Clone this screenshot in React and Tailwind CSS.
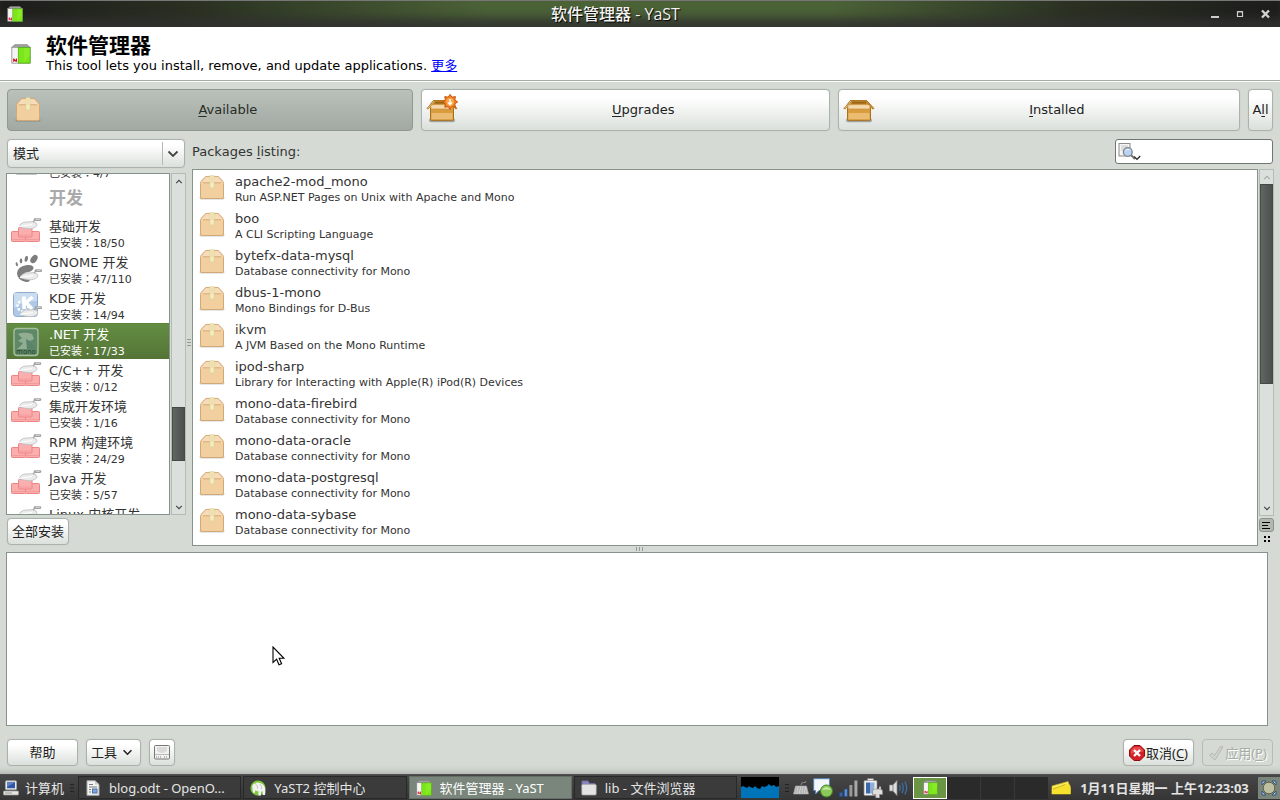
import React from "react";

const packages = [
  ["apache2-mod_mono", "Run ASP.NET Pages on Unix with Apache and Mono"],
  ["boo", "A CLI Scripting Language"],
  ["bytefx-data-mysql", "Database connectivity for Mono"],
  ["dbus-1-mono", "Mono Bindings for D-Bus"],
  ["ikvm", "A JVM Based on the Mono Runtime"],
  ["ipod-sharp", "Library for Interacting with Apple(R) iPod(R) Devices"],
  ["mono-data-firebird", "Database connectivity for Mono"],
  ["mono-data-oracle", "Database connectivity for Mono"],
  ["mono-data-postgresql", "Database connectivity for Mono"],
  ["mono-data-sybase", "Database connectivity for Mono"],
];

const patterns = [
  { name: "基础开发", count: "18/50", Icon: BricksIcon },
  { name: "GNOME 开发", count: "47/110", Icon: GnomeIcon },
  { name: "KDE 开发", count: "14/94", Icon: KdeIcon },
  { name: ".NET 开发", count: "17/33", Icon: MonoIcon, selected: true },
  { name: "C/C++ 开发", count: "0/12", Icon: BricksIcon },
  { name: "集成开发环境", count: "1/16", Icon: BricksIcon },
  { name: "RPM 构建环境", count: "24/29", Icon: BricksIcon },
  { name: "Java 开发", count: "5/57", Icon: BricksIcon },
  { name: "Linux 内核开发", count: "0/8", Icon: BricksIcon },
];

const raised =
  "rounded border border-[#a9b3ab] bg-linear-to-b from-white from-20% to-[#dbe0db] shadow-[0_0_1px_#a9b3ab]";

function YastIcon({ className }) {
  return (
    <svg viewBox="0 0 22 22" className={className} aria-hidden="true">
      <path d="M1 4 L4 0.8 H18 L21 4 Z" fill="#a5a5a5" stroke="#777" strokeWidth="0.8" />
      <rect x="1" y="3.6" width="20" height="17.4" fill="#d8d8d8" stroke="#888" />
      <path d="M1.6 4.2 H8 V20.4 H1.6 Z" fill="#f4f4f4" />
      <rect x="8" y="4" width="13" height="17" fill="#7ce61a" stroke="#4caf0c" strokeWidth="0.8" />
      <path d="M14 4.5 H20.5 V13 L14 20.5 Z" fill="#8ff02d" opacity="0.6" />
      <path d="M3 19.6 V16 M6 19.6 V16 M3 16.6 L6 19.2" stroke="#d00f1c" strokeWidth="1.3" fill="none" />
    </svg>
  );
}

function PackageIcon({ className }) {
  return (
    <svg viewBox="0 0 26 26" className={className} aria-hidden="true">
      <rect x="0.5" y="21.5" width="25" height="3" rx="1.5" fill="#000" opacity="0.2" />
      <path d="M1.5 8.5 Q1.5 7 2.5 6 L6 2.2 Q6.8 1.4 8 1.4 H18 Q19.2 1.4 20 2.2 L23.5 6 Q24.5 7 24.5 8.5 V22 Q24.5 23.5 23 23.5 H3 Q1.5 23.5 1.5 22 Z" fill="#f1cf9f" stroke="#d2a876" />
      <path d="M2.6 7.6 L7 2.2 H19 L23.4 7.6 Z" fill="#f8dcba" />
      <path d="M4 7.8 H22" stroke="#d4ab79" />
      <path d="M11 0.8 H15 V12 L14.2 13.5 L13 12.6 L11.8 13.5 L11 12 Z" fill="#f5eec0" stroke="#ddd09c" strokeWidth="0.7" />
      <path d="M13 2 V8" stroke="#d8c48e" strokeWidth="0.7" />
    </svg>
  );
}

function OpenBoxIcon({ star, className }) {
  return (
    <svg viewBox="0 0 32 28" className={className} aria-hidden="true">
      <rect x="3" y="22.6" width="26" height="3.6" rx="1.8" fill="#000" opacity="0.3" />
      <path d="M7.5 4.6 H23.5 L27.5 9 H4 Z" fill="#d9a14c" stroke="#a86e16" />
      <path d="M9.5 5.4 H22.5 L23.5 7.8 H8 Z" fill="#9a6410" />
      <path d="M4.5 11.5 H27.5 V23.5 Q27.5 24.3 26.5 24.3 H5.5 Q4.5 24.3 4.5 23.5 Z" fill="#d99c3d" stroke="#a97018" />
      <path d="M5.5 17 H26.5 V23.4 H5.5 Z" fill="#efc583" opacity="0.75" />
      <path d="M4.2 8.6 H27.6 L26.6 13 H5.2 Z" fill="#f5d9ac" stroke="#c8903f" strokeWidth="0.7" />
      <path d="M7.5 4.6 L4.2 8.8 L0.8 12.4 L2.2 13 L5 9.6 L8.8 5.4 Z" fill="#f4d49c" stroke="#a97018" strokeWidth="0.8" />
      <path d="M23.5 4.6 L27.6 8.8 L31 12.4 L29.6 13 L27 9.6 L22.4 5.4 Z" fill="#d59335" stroke="#a97018" strokeWidth="0.8" />
      {star && (
        <g transform="translate(-0.4 -1.6)">
          <path d="M24.5 0 L26.4 2.8 L29.8 2.2 L29.2 5.6 L32 7.5 L29.2 9.4 L29.8 12.8 L26.4 12.2 L24.5 15 L22.6 12.2 L19.2 12.8 L19.8 9.4 L17 7.5 L19.8 5.6 L19.2 2.2 L22.6 2.8 Z" fill="#f58220" stroke="#c5540a" />
          <circle cx="24.5" cy="7.5" r="3.8" fill="#fba94c" />
          <path d="M24.5 4.5 V10 M22.6 8 L24.5 10.2 L26.4 8" stroke="#fff" strokeWidth="1.4" fill="none" />
        </g>
      )}
    </svg>
  );
}

function Trowel() {
  return (
    <g>
      <path d="M9 8.5 Q10 5.4 14 4.2 L23 3.6 Q27 4.5 27 7 Q26 10 20 10.8 Q13 10.6 9 8.5 Z" fill="#ebebeb" stroke="#bdbdbd" strokeWidth="0.8" />
      <path d="M9 8.5 L22 6.5" stroke="#fff" strokeWidth="1" />
      <path d="M23 4 L25.5 1.6" stroke="#a8a8a8" strokeWidth="1.4" />
      <path d="M25 1.6 H30" stroke="#a0a0a0" strokeWidth="2.6" strokeLinecap="round" />
      <path d="M26 1.3 H29.4" stroke="#dadada" strokeWidth="1" strokeLinecap="round" />
    </g>
  );
}

function BricksIcon() {
  return (
    <svg viewBox="0 0 32 26" className="mb-1 h-[26px] w-8" aria-hidden="true">
      <g fill="#fbaeae" stroke="#ee8484">
        <rect x="1.5" y="13.5" width="14" height="10" rx="0.8" />
        <rect x="15.5" y="13.5" width="14" height="10" rx="0.8" />
        <rect x="8.5" y="9.5" width="13.5" height="9.5" rx="0.8" />
      </g>
      <path d="M2 21.5 H29 M9 17 H21" stroke="#f49494" strokeWidth="0.8" />
      <Trowel />
    </svg>
  );
}

function DiscIcon() {
  return (
    <svg viewBox="0 0 32 28" className="mb-1 h-7 w-8" aria-hidden="true">
      <rect x="4" y="2" width="25" height="25" rx="3" fill="#b9bab8" stroke="#8d8e8c" />
    </svg>
  );
}

function GnomeIcon() {
  return (
    <svg viewBox="0 0 32 30" className="h-[30px] w-8" aria-hidden="true">
      <g fill="#7d7d7d">
        <ellipse cx="24" cy="5" rx="3" ry="4.6" transform="rotate(35 24 5)" />
        <ellipse cx="16.3" cy="4.8" rx="1.6" ry="3" transform="rotate(15 16.3 4.8)" />
        <ellipse cx="11" cy="7" rx="1.3" ry="2.4" />
        <ellipse cx="6.8" cy="10.2" rx="1.1" ry="2" transform="rotate(-15 6.8 10.2)" />
        <path d="M7 19 Q8 12 17 11 Q24 10.5 23.5 14.5 Q22 18 16 18.5 Q12 20 14 23 Q18 27 20 25 Q20 28.5 16 28 Q7 26 7 19 Z" />
      </g>
      <g transform="translate(1 15)"><Trowel /></g>
    </svg>
  );
}

function KdeIcon() {
  return (
    <svg viewBox="0 0 32 28" className="h-7 w-8" aria-hidden="true">
      <rect x="3.5" y="1.5" width="24" height="24" rx="3" fill="#aec8e6" stroke="#8facd0" />
      <path d="M4 2 H27 V10 Q14 9 4 17 Z" fill="#c9dcf0" />
      <circle cx="13" cy="15" r="5.5" fill="none" stroke="#fff" strokeWidth="2.4" strokeDasharray="2.4 1.6" />
      <path d="M14 5.5 V18 M22.5 6 L16 11.5 L22 18" stroke="#fff" strokeWidth="3.6" fill="none" />
      <g transform="translate(1 15)"><Trowel /></g>
    </svg>
  );
}

function MonoIcon() {
  return (
    <svg viewBox="0 0 32 30" className="h-[30px] w-8" aria-hidden="true">
      <rect x="4" y="1.5" width="24" height="27" rx="3" fill="#5f8868" stroke="#a3bf9c" strokeWidth="1.4" />
      <path d="M8 7 Q14 4.5 22 7 L24 12 L20 14 L25 19 V22 H7 Q11 19 13 16 L8 14 L12 11 Z" fill="#92ae92" />
      <path d="M16 12 L20 14 L25 19 V22 H17 Z" fill="#44705c" opacity="0.7" />
      <text x="16" y="27.3" textAnchor="middle" fontSize="7" fontFamily="DejaVu Sans, sans-serif" fill="#233e28">mono</text>
    </svg>
  );
}

function Chevron({ up, className }) {
  return (
    <svg viewBox="0 0 12 8" className={className} aria-hidden="true">
      <path d={up ? "M1.5 6.5 L6 2 L10.5 6.5" : "M1.5 1.5 L6 6 L10.5 1.5"} fill="none" stroke="currentColor" strokeWidth="1.8" />
    </svg>
  );
}

function Key({ children }) {
  return <span className="underline decoration-1 underline-offset-2">{children}</span>;
}

function ScrollBar({ above, thumb, below, topDisabled }) {
  return (
    <div className="flex w-[15px] shrink-0 flex-col border border-[#b3bcb4] bg-[#dbe0dc]">
      <button aria-label="向上滚动" className={`flex h-[14px] shrink-0 items-center justify-center ${topDisabled ? "text-[#a6ada7]" : "text-[#444]"}`}>
        <Chevron up className="h-[5px] w-2" />
      </button>
      <div className={above} />
      <div className={`border border-[#454a46] bg-linear-to-r from-[#606661] to-[#4b504c] ${thumb}`} />
      <div className={below} />
      <button aria-label="向下滚动" className="flex h-[14px] shrink-0 items-center justify-center text-[#444]">
        <Chevron className="h-[5px] w-2" />
      </button>
    </div>
  );
}

function TitleBar() {
  return (
    <header className="grid h-[27px] shrink-0 grid-cols-[1fr_auto_1fr] items-center border-t border-[#777] bg-[linear-gradient(90deg,#1d1d1b_0%,#2a3022_15%,#4b6237_38%,#4b6237_65%,#2a3022_84%,#1d1d1b_100%)] px-[7px] shadow-[inset_0_-12px_10px_-3px_#30312fdd]">
      <YastIcon className="size-4" />
      <h1 className="pr-[49px] font-['Open_Sans','Noto_Sans_CJK_SC',sans-serif] text-base leading-6 font-medium text-[#f2f2f2] [text-shadow:1px_1px_1px_#000]">软件管理器 - YaST</h1>
      <div className="flex justify-end gap-[9px]">
        <button aria-label="最小化" className="flex size-4 items-center justify-center">
          <svg viewBox="0 0 16 16" className="size-4"><path d="M4 11 H12" stroke="#ccc" strokeWidth="2" /></svg>
        </button>
        <button aria-label="最大化" className="flex size-4 items-center justify-center">
          <svg viewBox="0 0 16 16" className="size-4"><path d="M5.5 5.5 H10.5 V10.5 H5.5 Z M5 6 H11" stroke="#ccc" strokeWidth="1.2" fill="none" /></svg>
        </button>
        <button aria-label="关闭" className="flex size-4 items-center justify-center">
          <svg viewBox="0 0 16 16" className="size-4"><path d="M5 4.5 L12 11.5 M12 4.5 L5 11.5" stroke="#d2d2d2" strokeWidth="2.4" /></svg>
        </button>
      </div>
    </header>
  );
}

function Filters() {
  const big = `${raised} flex h-[42px] flex-auto items-center pl-1`;
  return (
    <nav className="flex gap-2 px-[7px] pt-[7px] text-[#222]">
      <button aria-pressed="true" className="flex h-[42px] flex-auto items-center rounded border border-[#8f998f] bg-linear-to-b from-[#bac1ba] to-[#a2a9a2] pl-1 text-[#282c28]">
        <span className="flex w-8 justify-center"><PackageIcon className="size-[26px]" /></span>
        <span className="flex-1 px-1"><Key>A</Key>vailable</span>
      </button>
      <button className={big}>
        <OpenBoxIcon star className="h-7 w-8 overflow-visible" />
        <span className="flex-1 px-1"><Key>U</Key>pgrades</span>
      </button>
      <button className={big}>
        <OpenBoxIcon className="h-7 w-8" />
        <span className="flex-1 px-1"><Key>I</Key>nstalled</span>
      </button>
      <button className={`${raised} h-[42px] w-[25px]`}>A<Key>l</Key>l</button>
    </nav>
  );
}

function PatternRow({ name, count, Icon, selected }) {
  return (
    <li className={`flex h-9 shrink-0 ${selected ? "border-t border-[#5b8538] bg-linear-to-b from-[#638d42] to-[#547437] text-white" : "text-[#333]"}`}>
      <div className="flex w-[42px] shrink-0 items-center pl-[3px]"><Icon /></div>
      <div className={`whitespace-nowrap ${selected ? "pt-[3px]" : "pt-1"}`}>
        <div className="min-h-4 leading-4">{name}</div>
        <div className="text-[11px] leading-[15px]">
          已安装<span className="font-['Noto_Sans_CJK_TC',sans-serif]">：</span>{count}
        </div>
      </div>
    </li>
  );
}

function Sidebar() {
  return (
    <aside className="flex w-[180px] shrink-0 flex-col">
      <div className="relative ml-px w-[178px]">
        <select aria-label="分组方式" className={`${raised} h-[29px] w-full appearance-none pl-[5px] text-[#222]`}>
          <option>模式</option>
        </select>
        <span className="pointer-events-none absolute inset-y-[3px] right-0 flex w-[23px] items-center justify-center border-l border-[#b3bab3] pr-[3px] text-[#444]">
          <Chevron className="h-[8px] w-3" />
        </span>
      </div>
      <div className="mt-[5px] flex min-h-0 flex-1 gap-px">
        <div className="min-w-0 flex-1 overflow-hidden border border-[#87938a] bg-white">
          <ul className="-mt-[29px] flex flex-col">
            <PatternRow name="" count="4/7" Icon={DiscIcon} />
            <li className="flex h-[34px] shrink-0 items-center pl-[42px] text-[17px] font-bold text-[#aaa]">开发</li>
            {patterns.map((p) => <PatternRow key={p.name} {...p} />)}
          </ul>
        </div>
        <ScrollBar above="flex-[220]" thumb="h-[54px]" below="flex-[39]" />
      </div>
      <div className="ml-px pt-[3px] pb-px">
        <button className={`${raised} block h-[27px] w-[62px] text-[#222]`}>全部安装</button>
      </div>
    </aside>
  );
}

function Listing() {
  return (
    <section className="flex min-w-0 flex-1 flex-col">
      <div className="flex h-[25px] items-center justify-between pr-px">
        <label htmlFor="search" className="text-[#333]">Packages <Key>l</Key>isting:</label>
        <div className="flex h-[25px] w-[158px] items-center rounded-[3px] border border-[#6e7872] bg-white pl-0.5">
          <svg viewBox="0 0 24 20" className="h-5 w-6 shrink-0" aria-hidden="true">
            <rect x="1" y="1.5" width="11" height="12.5" fill="#f5f5f3" stroke="#8b8d88" />
            <path d="M3 4 H10 M3 6 H9 M3 8 H6" stroke="#c5c5c2" />
            <circle cx="9.8" cy="10" r="4.4" fill="#b9d3f0" stroke="#808a96" strokeWidth="1.4" />
            <path d="M7.5 9 Q9 6.8 11.5 7.6" stroke="#eef6ff" fill="none" />
            <path d="M13 13 L17 17" stroke="#777" strokeWidth="2" />
            <path d="M16 14.5 L19 17.3 L22.3 14" stroke="#333" strokeWidth="1.3" fill="none" />
          </svg>
          <input id="search" type="text" className="min-w-0 flex-1 bg-transparent outline-none" />
        </div>
      </div>
      <div className="mt-[5px] flex min-h-0 flex-1 gap-px">
        <ul className="min-w-0 flex-1 overflow-hidden border border-[#87938a] bg-white text-[#333]">
          {packages.map(([name, text]) => (
            <li key={name} className="flex h-[37px] items-start">
              <PackageIcon className="ml-[6px] mt-[5px] size-[26px]" />
              <div className="ml-[10px] pt-1">
                <div className="leading-4">{name}</div>
                <div className="text-[11px] leading-4">{text}</div>
              </div>
            </li>
          ))}
        </ul>
        <div className="flex flex-col">
          <div className="flex min-h-0 flex-1">
            <ScrollBar above="h-0" thumb="h-[200px]" below="flex-1" topDisabled />
          </div>
          <button aria-label="列表视图" className="mt-0.5 flex h-[14px] w-[15px] items-center justify-center rounded-[3px] border border-[#8b958c] bg-[#b0b8b0]">
            <svg viewBox="0 0 9 8" className="h-2 w-[9px]"><path d="M0 1.5 H8 M0 4.5 H6 M0 7.5 H8" stroke="#000" /></svg>
          </button>
          <button aria-label="图标视图" className="flex h-[14px] w-[15px] items-center justify-center">
            <svg viewBox="0 0 6 6" className="size-1.5"><path d="M0 1 H2 M4 1 H6 M0 5 H2 M4 5 H6" stroke="#000" strokeWidth="2" /></svg>
          </button>
        </div>
      </div>
    </section>
  );
}

function Actions() {
  return (
    <footer className="flex h-12 shrink-0 items-start gap-2 px-[7px] pt-[13px] text-[#222] shadow-[inset_0_-8px_6px_-6px_#adb1ac]">
      <button className={`${raised} h-[27px] w-[71px]`}>帮助</button>
      <button className={`${raised} flex h-[27px] w-[55px] items-center justify-center gap-[5px] pr-[3px]`}>
        工具<Chevron className="h-[7px] w-[11px]" />
      </button>
      <button aria-label="磁盘使用情况" className={`${raised} flex h-[27px] w-[26px] items-center justify-center`}>
        <svg viewBox="0 0 16 15" className="h-[15px] w-4"><rect x="0.5" y="0.5" width="15" height="13.5" rx="1" fill="#f2f2f1" stroke="#777" /><path d="M3 2 H13 V6 Q8 10 3 6 Z" fill="#dadada" /><path d="M1 9.5 H15" stroke="#bbb" /><path d="M2 12 H8 M10 12 H14" stroke="#bbb" strokeWidth="2" strokeDasharray="1 1" /></svg>
      </button>
      <span className="flex-1" />
      <button className={`${raised} flex h-[27px] w-[71px] items-center justify-center gap-px whitespace-nowrap`}>
        <svg viewBox="0 0 16 16" className="size-4 shrink-0"><path d="M5 0.5 H11 L15.5 5 V11 L11 15.5 H5 L0.5 11 V5 Z" fill="#d31f25" stroke="#8d0c10" /><path d="M5 2 H11 L14 5 V7 Q8 6 2 9 V5 Z" fill="#ee5a5d" opacity="0.7" /><path d="M5 5 L11 11 M11 5 L5 11" stroke="#fff" strokeWidth="2.4" /></svg>
        <span className="font-['Noto_Sans','Noto_Sans_CJK_SC',sans-serif]">取消(<Key>C</Key>)</span>
      </button>
      <button disabled className="flex h-[27px] w-[71px] items-center justify-center gap-px whitespace-nowrap rounded border border-[#b4bdb5] text-[#a5ada5] [text-shadow:1px_1px_0_#fff]">
        <svg viewBox="0 0 16 16" className="size-4 shrink-0"><path d="M1.5 10 L4 8 L6.5 10.5 L12.5 1.5 L15 2 L7.5 14.5 H6 Z" fill="#cdd2cc" stroke="#b5bbb4" /></svg>
        <span className="font-['Noto_Sans','Noto_Sans_CJK_SC',sans-serif]">应用(<Key>P</Key>)</span>
      </button>
    </footer>
  );
}

function Task({ icon, children, active }) {
  return (
    <button className={`flex min-w-0 flex-1 items-center gap-2 border pl-[6px] text-left ${active ? "border-[#646e66] bg-[#7a867b] text-white" : "border-[#282828] bg-[#3b3b3b]"}`}>
      {icon}
      <span className="truncate">{children}</span>
    </button>
  );
}

function Grip() {
  return (
    <svg viewBox="0 0 4 10" className="h-[10px] w-1 shrink-0" aria-hidden="true"><path d="M0 1.5 H4 M0 5 H4 M0 8.5 H4" stroke="#222" /></svg>
  );
}

function TaskBar() {
  return (
    <footer className="flex h-[26px] shrink-0 items-center border-t border-[#505050] bg-linear-to-b from-[#474747] to-[#353535] pl-[3px] font-['Noto_Sans','Noto_Sans_CJK_SC',sans-serif] text-[13px] text-[#e4e4e4]">
      <button className="flex w-[67px] shrink-0 items-center gap-[6px]">
        <svg viewBox="0 0 16 16" className="size-4"><rect x="2.5" y="0.8" width="11" height="9" rx="1" fill="#e8e8e6" stroke="#aaa" strokeWidth="0.8" /><rect x="4" y="2.2" width="8" height="6" fill="#2f56a8" /><path d="M4 2.2 H12 L4 7 Z" fill="#6082c4" /><rect x="0.5" y="11" width="15" height="4" rx="0.8" fill="#e4e4e1" stroke="#999" strokeWidth="0.7" /><path d="M2 13 H9" stroke="#999" /></svg>
        计算机
      </button>
      <Grip />
      <div className="ml-1 flex h-[23px] min-w-0 flex-1 gap-0.5 pr-[4px]">
        <Task icon={<svg viewBox="0 0 16 16" className="size-4 shrink-0"><path d="M2 0.8 H10 L14 4.5 V15.3 H2 Z" fill="#f4f4f4" stroke="#aaa" /><path d="M10 0.8 V4.5 H14 Z" fill="#ccc" /><path d="M4 4.5 H8 M4 7 H12 M4 9.5 H6 M4 12 H6" stroke="#777" /><rect x="7.5" y="9" width="4.5" height="4" fill="#7fa6da" stroke="#4a70a8" /></svg>}>blog.odt - OpenO...</Task>
        <Task icon={<svg viewBox="0 0 16 16" className="size-4 shrink-0"><circle cx="8" cy="8" r="7.6" fill="#7dc83a" /><path d="M2.2 6 Q3 3 5.5 3.5 Q7 2 10 3 Q14 4 15 8 Q15.8 11 15 15 H12.6 V11.5 H11 V15.5 H8.4 V11 Q6.5 12 6 10 Q5 10.5 4.8 13 L3 12.5 Q2.4 9 2.2 6 Z" fill="#f2f2f2" /><path d="M5.5 4.5 Q8.5 5 7.5 8.5 M10 4 Q12 6 11.5 9" stroke="#bbb" strokeWidth="0.8" fill="none" /></svg>}>YaST2 控制中心</Task>
        <Task active icon={<YastIcon className="size-4 shrink-0" />}>软件管理器 - YaST</Task>
        <Task icon={<svg viewBox="0 0 16 16" className="size-4 shrink-0"><path d="M1 1 H7 L8.5 3.5 H14 V8 H1 Z" fill="#8b86bd" stroke="#6f6aa5" /><rect x="0.8" y="4.5" width="14.4" height="10.5" rx="1" fill="#e3e3e3" stroke="#aaa" strokeWidth="0.7" /></svg>}>lib - 文件浏览器</Task>
      </div>
      <svg viewBox="0 0 38 21" className="h-[21px] w-[38px] shrink-0" aria-hidden="true"><rect width="38" height="21" fill="#000" /><path d="M0 10 L2 9 L4 10 L6 11 L8 9 L9 10 L12 11 L14 9 L16 11 L19 12 L21 9 L23 10 L26 9 L28 7 L30 9 L33 8 L35 10 L38 9 V21 H0 Z" fill="#0074b8" /></svg>
      <div className="ml-1.5"><Grip /></div>
      <div className="ml-1 flex shrink-0 items-center gap-1">
        <svg viewBox="0 0 16 16" className="h-4 w-4"><path d="M8 5 Q8 2 11 2.5 Q13 3 13 1" stroke="#888" fill="none" /><path d="M2.5 6 H13.5 L15.5 14 H0.5 Z" fill="#d2d2d2" stroke="#9a9a9a" strokeWidth="0.7" /><path d="M3 8 H13 M2.5 10 H13.5 M2 12 H14" stroke="#777" strokeDasharray="1.5 1" strokeWidth="0.7" /></svg>
        <svg viewBox="0 0 20 20" className="size-5"><path d="M0.7 0.7 H16.5 V12.5 H6 L2.5 16 V12.5 H0.7 Z" fill="#f3f7fb" stroke="#5485bf" /><circle cx="13.5" cy="13" r="6" fill="#8cc85a" stroke="#3f8421" /><path d="M9 12 Q13.5 6 18 12 Q13.5 11 9 12 Z" fill="#c2e8a2" /></svg>
        <svg viewBox="0 0 20 18" className="ml-0.5 h-[18px] w-5"><rect x="0.5" y="13.5" width="3.2" height="4" fill="#3465a4" stroke="#204a87" strokeWidth="0.6" /><rect x="5.2" y="10" width="3.2" height="7.5" fill="#5d8cc6" stroke="#204a87" strokeWidth="0.6" /><rect x="10.4" y="6" width="3" height="11.5" fill="#999" /><rect x="15.4" y="1.5" width="3" height="16" fill="#a8a8a8" /></svg>
        <svg viewBox="0 0 20 20" className="h-5 w-5"><rect x="4.5" y="0.5" width="6" height="3" fill="#eee" stroke="#777" strokeWidth="0.6" /><rect x="1" y="2.5" width="13" height="15" rx="1" fill="#f0f0f0" stroke="#888" strokeWidth="0.7" /><rect x="3" y="4.5" width="4.5" height="11" fill="#3a68a8" /><rect x="8" y="4.5" width="3.5" height="11" fill="#8ab0dc" /><path d="M9.5 13.5 Q9.5 11 11.5 11 H17.5 Q19.5 11 19.5 13.5 V16.5 H16.5 V20 H12.8 V16.5 H9.5 Z" fill="#dedede" stroke="#888" strokeWidth="0.8" /><path d="M12.2 11 V8.4 M17 11 V8.4" stroke="#ddd" strokeWidth="1.6" /></svg>
        <svg viewBox="0 0 20 18" className="ml-0.5 h-[18px] w-5"><path d="M0.5 6 H4 L8 1.5 V16.5 L4 12 H0.5 Z" fill="#dedede" stroke="#888" strokeWidth="0.7" /><path d="M4 6 V12" stroke="#888" /><path d="M10.5 6 Q12 9 10.5 12 M13 4 Q15.5 9 13 14 M15.8 2.5 Q19.5 9 15.8 15.5" stroke="#3d6ea8" strokeWidth="1.3" fill="none" /></svg>
      </div>
      <div className="ml-1 flex h-[22px] w-[135px] shrink-0 gap-px bg-[#2a2a2a]">
        <button aria-label="工作区 1" className="flex w-[34px] items-center justify-center border border-white bg-[#6a9544]"><YastIcon className="size-[15px]" /></button>
        <button aria-label="工作区 2" className="flex-1 border-r border-[#383838]" />
        <button aria-label="工作区 3" className="flex-1 border-r border-[#383838]" />
        <button aria-label="工作区 4" className="flex-1" />
      </div>
      <svg viewBox="0 0 20 16" className="ml-[3px] h-4 w-5 shrink-0" aria-hidden="true"><path d="M1 6 L17 1.5 L19.5 8 V14 H1 Z" fill="#f8ee6e" stroke="#cfb60e" strokeWidth="0.7" /><path d="M1 7.5 L6 7.5 L16 3.5 L19.3 5.5 V14 H0.8 Z" fill="#f6e12f" /><path d="M2 9 L14 4.5" stroke="#b9a30a" strokeWidth="0.7" /></svg>
      <time className="ml-[6px] w-[175px] shrink-0 text-center whitespace-nowrap font-bold">1月11日星期一 上午12:23:03</time>
      <button aria-label="显示桌面" className="ml-1.5 flex size-[22px] shrink-0 items-center justify-center bg-[#7a867b]">
        <svg viewBox="0 0 16 16" className="size-4"><path d="M1 1 H5 L1 5 Z M15 1 H11 L15 5 Z M1 15 H5 L1 11 Z M15 15 H11 L15 11 Z" fill="#a9c0df" stroke="#39567f" /><circle cx="8" cy="8" r="5.8" fill="#bfc0a0" stroke="#63644a" /></svg>
      </button>
    </footer>
  );
}

export default function App() {
  return (
    <div className="flex h-screen flex-col overflow-hidden bg-[#d5dad4] font-['DejaVu_Sans','Noto_Sans_CJK_SC',sans-serif] text-[13px] leading-4">
      <TitleBar />
      <div className="flex h-[55px] shrink-0 items-center gap-[15px] border-b border-white bg-white pl-[11px] text-black shadow-[inset_0_-1px_0_#a4ada4]">
        <YastIcon className="size-5" />
        <div>
          <h2 className="text-[21px] leading-6 font-bold">软件管理器</h2>
          <p className="leading-4">This tool lets you install, remove, and update applications. <a href="#more" className="text-[#0000ff] underline">更多</a></p>
        </div>
      </div>
      <Filters />
      <main className="flex min-h-0 flex-1 flex-col pl-[6px] pr-[6px] pt-2">
        <div className="flex min-h-0 flex-1">
          <Sidebar />
          <div className="flex w-[6px] items-center justify-center">
            <svg viewBox="0 0 4 8" className="h-2 w-1"><path d="M0 0.5 H4 M0 3.5 H4 M0 6.5 H4" stroke="#949b95" /></svg>
          </div>
          <Listing />
        </div>
        <div className="flex h-[6px] shrink-0 items-center justify-center">
          <svg viewBox="0 0 8 4" className="h-1 w-2"><path d="M0.5 0 V4 M3.5 0 V4 M6.5 0 V4" stroke="#949b95" /></svg>
        </div>
        <section aria-label="软件包详情" className="relative mr-[6px] h-[174px] shrink-0 border border-[#87938a] bg-white">
          <svg viewBox="0 0 13 20" className="absolute left-[265px] top-[93px] h-5 w-[13px]" aria-hidden="true">
            <path d="M1 1 V16.5 L4.6 13.2 L7 18.8 L9.6 17.7 L7.2 12.3 H12 Z" fill="#fff" stroke="#000" strokeWidth="1.1" />
          </svg>
        </section>
      </main>
      <Actions />
      <TaskBar />
    </div>
  );
}
